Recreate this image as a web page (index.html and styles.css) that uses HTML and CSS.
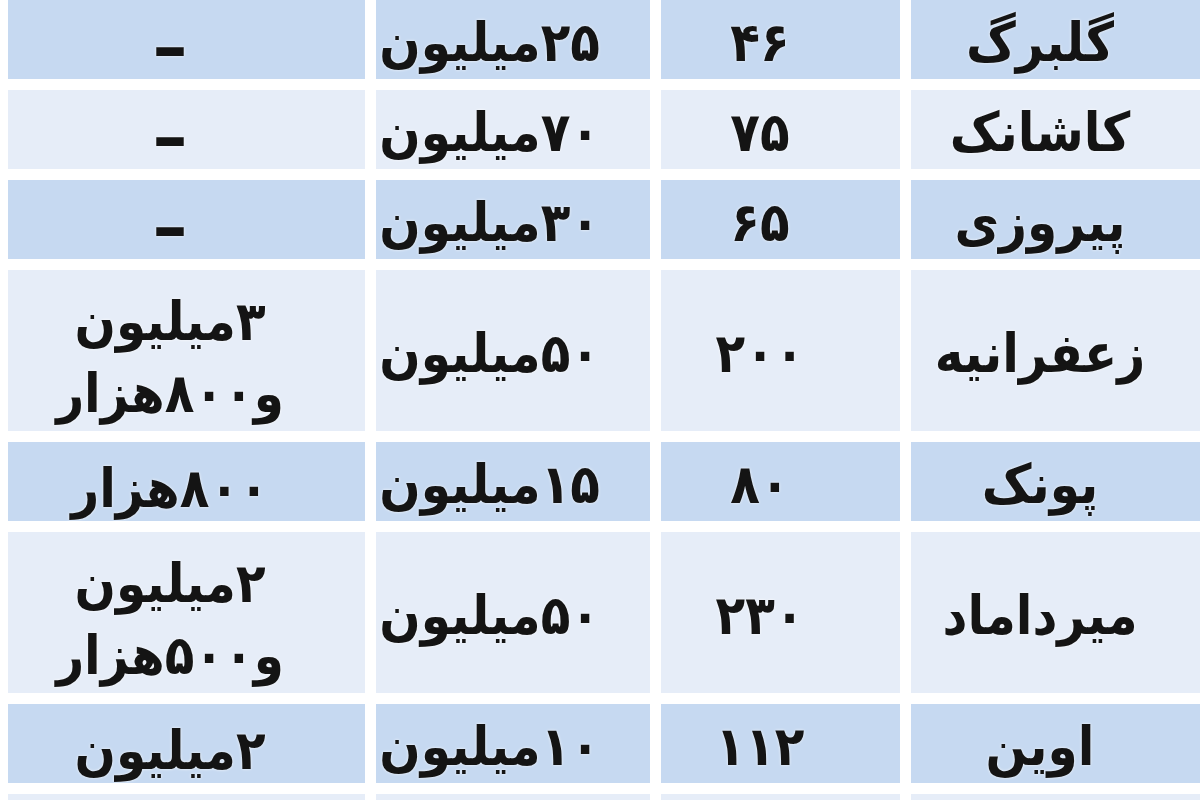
FILE: index.html
```html
<!DOCTYPE html>
<html lang="fa">
<head>
<meta charset="utf-8">
<title>جدول</title>
<link rel="stylesheet" href="styles.css">
</head>
<body>
<div class="table">
  <div class="row dark">
    <div class="cell name">گلبرگ</div>
    <div class="cell area">۴۶</div>
    <div class="cell price">۲۵میلیون</div>
    <div class="cell rent"><span class="dash">–</span></div>
  </div>
  <div class="row light">
    <div class="cell name">کاشانک</div>
    <div class="cell area">۷۵</div>
    <div class="cell price">۷۰میلیون</div>
    <div class="cell rent"><span class="dash">–</span></div>
  </div>
  <div class="row dark">
    <div class="cell name">پیروزی</div>
    <div class="cell area">۶۵</div>
    <div class="cell price">۳۰میلیون</div>
    <div class="cell rent"><span class="dash">–</span></div>
  </div>
  <div class="row light tall">
    <div class="cell name">زعفرانیه</div>
    <div class="cell area">۲۰۰</div>
    <div class="cell price">۵۰میلیون</div>
    <div class="cell rent">۳میلیون<br>و۸۰۰هزار</div>
  </div>
  <div class="row dark">
    <div class="cell name">پونک</div>
    <div class="cell area">۸۰</div>
    <div class="cell price">۱۵میلیون</div>
    <div class="cell rent">۸۰۰هزار</div>
  </div>
  <div class="row light tall">
    <div class="cell name">میرداماد</div>
    <div class="cell area">۲۳۰</div>
    <div class="cell price">۵۰میلیون</div>
    <div class="cell rent">۲میلیون<br>و۵۰۰هزار</div>
  </div>
  <div class="row dark">
    <div class="cell name">اوین</div>
    <div class="cell area">۱۱۲</div>
    <div class="cell price">۱۰میلیون</div>
    <div class="cell rent">۲میلیون</div>
  </div>
  <div class="row light">
    <div class="cell name"></div>
    <div class="cell area"></div>
    <div class="cell price"></div>
    <div class="cell rent"></div>
  </div>
</div>
</body>
</html>
```
FILE: styles.css
```css
html, body {
  margin: 0;
  padding: 0;
  background: #ffffff;
  overflow: hidden;
  width: 1200px;
  height: 800px;
}

.table {
  direction: rtl;
  width: 1192px;
  margin-left: 8px;
  display: flex;
  flex-direction: column;
  gap: 11px;
  font-family: "DejaVu Sans Condensed", "DejaVu Sans", sans-serif;
  font-weight: bold;
  font-size: 54px;
  color: #141414;
}

.row {
  display: grid;
  grid-template-columns: 289px 239px 274px 357px;
  grid-template-rows: minmax(0, 1fr);
  column-gap: 11px;
  height: 79px;
  flex-shrink: 0;
}

.row.tall {
  height: 161px;
}

.cell {
  display: flex;
  align-items: center;
  justify-content: center;
  text-align: center;
  line-height: 72px;
  min-height: 0;
  padding-top: 6px;
  text-shadow: 0 0 3px rgba(255, 255, 255, 0.9);
  white-space: nowrap;
}

.dark .cell {
  background: #c6d9f1;
}

.light .cell {
  background: #e6edf8;
}

.name {
  padding-right: 31px;
}

.area {
  padding-right: 41px;
}

.price {
  justify-content: flex-start;
  padding-right: 50px;
}

.rent {
  padding-right: 33px;
  padding-top: 14px;
}

.dash {
  font-size: 70px;
  font-family: "DejaVu Sans", sans-serif;
}
```
